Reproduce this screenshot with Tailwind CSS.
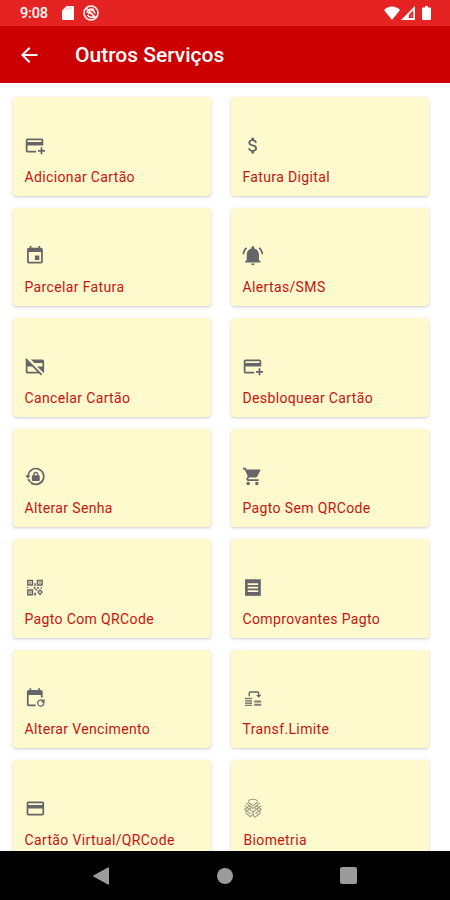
<!DOCTYPE html>
<html lang="pt-BR">
<head>
<meta charset="utf-8">
<title>Outros Serviços</title>
<script src="https://cdn.jsdelivr.net/npm/@tailwindcss/browser@4"></script>
</head>
<body class="bg-white">
<div class="flex h-[900px] w-[450px] flex-col overflow-hidden font-['Roboto',sans-serif]">
  <header class="shrink-0 text-white">
    <div class="flex h-[26px] items-center bg-[#e52322] pr-[19px] pl-5">
      <span class="w-[28px] pt-0.5 text-[14.500px] leading-none font-medium tracking-[-0.2px]">9:08</span>
      <svg class="ml-[14px] h-[14px] w-3" viewBox="0 0 12 14" fill="currentColor"><path d="M4.5 0H11a1 1 0 0 1 1 1v12a1 1 0 0 1-1 1H1a1 1 0 0 1-1-1V4.5z"/><path d="M4.7 1.6v2M6.9 1.6v2M9.1 1.6v2" stroke="#e52322" stroke-width=".7" opacity=".5"/></svg>
      <svg class="ml-[9px] size-[16px]" viewBox="0 0 16 16" fill="none" stroke="currentColor" stroke-width="1.6"><circle cx="8" cy="8" r="7"/><path d="M3.500 3.500 12.600 12.600M3.800 7.400C5 4 8.800 3.200 11 5.200M6 4.800c2.600-.600 5.400.800 6 3.600M4.500 10c1 2 4 3 6.500 1.800M5 8.500c1.500-1 3.500-.5 4.500 1"/></svg>
      <svg class="ml-auto h-[14px] w-4" viewBox="0 0 16 14" fill="currentColor"><path d="M8 14 0 4C4.400-.7 11.600-.7 16 4z"/></svg>
      <svg class="ml-px h-[14px] w-[14px]" viewBox="0 0 14 14"><path d="M14 0v14H0z" fill="currentColor"/><path d="M12.300 4.200V12H7.800V9z" fill="#e52322"/><path d="M11.200 8v3H9.600V9.600z" fill="currentColor" opacity=".35"/></svg>
      <svg class="ml-[7px] h-[14px] w-[9px]" viewBox="0 0 9 14" fill="currentColor"><path d="M3 0h3v1.500h2a1 1 0 0 1 1 1V13a1 1 0 0 1-1 1H1a1 1 0 0 1-1-1V2.500a1 1 0 0 1 1-1h2z"/></svg>
    </div>
    <div class="flex h-[57px] items-center bg-[#cc0000] pl-[17px]">
      <svg class="size-6" viewBox="0 0 24 24" fill="currentColor"><path d="M20.500 11H7.830l5.590-5.590L12 4l-8 8 8 8 1.410-1.410L7.830 13H20.500z"/></svg>
      <h1 class="ml-[34px] pt-0.5 text-[21px] leading-none font-medium">Outros Serviços</h1>
    </div>
  </header>

  <main class="grid min-h-0 flex-1 auto-rows-[98.500px] grid-cols-[198px_198px] content-start gap-x-5 gap-y-3 overflow-hidden pt-[14px] pl-[13px] text-[14px] leading-4 tracking-[0.36px] text-[#c61310] [&_section]:flex [&_section]:flex-col [&_section]:rounded-[4px] [&_section]:bg-[#fffacd] [&_section]:pt-[37.500px] [&_section]:pl-[11.500px] [&_section]:shadow-[0_1px_3px_rgba(70,70,100,0.28)] [&_svg]:mb-[13px] [&_svg]:-ml-[0.5px] [&_svg]:size-[21px] [&_svg]:fill-[#66666a]">
    <section>
      <svg viewBox="0 0 24 24"><path d="M20 4H4c-1.110 0-1.990.890-1.990 2L2 18c0 1.110.890 2 2 2h10v-2H4v-6h18V6c0-1.110-.890-2-2-2zm0 4H4V6h16v2zm4 9v2h-3v3h-2v-3h-3v-2h3v-3h2v3h3z"/></svg>
      <p>Adicionar Cartão</p>
    </section>
    <section>
      <svg viewBox="-.7 0 24 24"><path d="M11.800 10.900c-2.270-.590-3-1.200-3-2.150 0-1.090 1.010-1.850 2.700-1.850 1.780 0 2.440.850 2.500 2.100h2.210c-.070-1.720-1.120-3.300-3.210-3.810V3h-3v2.160c-1.940.420-3.500 1.680-3.500 3.610 0 2.310 1.910 3.460 4.700 4.130 2.500.600 3 1.480 3 2.410 0 .690-.490 1.790-2.700 1.790-2.060 0-2.870-.920-2.980-2.100h-2.200c.120 2.190 1.760 3.420 3.680 3.830V21h3v-2.150c1.950-.370 3.500-1.500 3.500-3.550 0-2.840-2.430-3.810-4.700-4.400z"/></svg>
      <p>Fatura Digital</p>
    </section>
    <section>
      <svg viewBox="-.5 0 24 24"><path d="M17 12h-5v5h5v-5zM16 1v2H8V1H6v2H5c-1.110 0-1.990.900-1.990 2L3 19c0 1.100.890 2 2 2h14c1.100 0 2-.900 2-2V5c0-1.100-.900-2-2-2h-1V1h-2zm3 18H5V8h14v11z"/></svg>
      <p>Parcelar Fatura</p>
    </section>
    <section>
      <svg viewBox="-.4 0 24 24"><path d="M5.600 4 4.200 2.600C1.900 4.400.300 7.300.200 10.500h2c.150-2.650 1.400-5 3.400-6.500zM21.800 10.500h2c-.150-3.200-1.730-6.100-4-7.900L18.400 4c2 1.500 3.300 3.850 3.400 6.500zM19 11c0-3.400-2-6-5.300-6.900V3.200C13.700 2.200 13 1.500 12 1.500s-1.700.700-1.700 1.700v.9C7 5 5 7.600 5 11v6l-2 2v1h18v-1l-2-2v-6zM12 23c1.100 0 2-.8 2-2h-4c0 1.200.9 2 2 2z"/></svg>
      <p>Alertas/SMS</p>
    </section>
    <section>
      <svg viewBox="0 0 24 24"><path d="M7.830 4H21c1.110 0 2 .890 2 2v12c0 .550-.220 1.050-.580 1.420L15 12h6V8h-9.170zM19.500 22.300 17.170 20H4c-1.110 0-2-.890-2-2V4.800L1.300 4.100 2.700 2.700 20.900 20.900zM4 12v6h11.170l-6-6z"/></svg>
      <p>Cancelar Cartão</p>
    </section>
    <section>
      <svg viewBox="0 0 24 24"><path d="M20 4H4c-1.110 0-1.990.890-1.990 2L2 18c0 1.110.890 2 2 2h10v-2H4v-6h18V6c0-1.110-.890-2-2-2zm0 4H4V6h16v2zm4 9v2h-3v3h-2v-3h-3v-2h3v-3h2v3h3z"/></svg>
      <p>Desbloquear Cartão</p>
    </section>
    <section>
      <svg viewBox="-.5 0 24 24"><path d="M13 2a10 10 0 0 0-9.900 8.800H.800L4 14.200l3.200-3.400H5.100A8 8 0 1 1 7.900 18l-1.300 1.600A10 10 0 1 0 13 2z"/><path d="M3.400 15.200c.6 1.600 1.500 3 2.800 4l1.300-1.500c-.9-.8-1.700-1.800-2.100-3z"/><path fill-rule="evenodd" d="M16.500 10.500h-.5V9.700a3 3 0 0 0-6 0v.8h-.5c-.6 0-1 .4-1 1V16c0 .6.400 1 1 1h7c.6 0 1-.4 1-1v-4.500c0-.6-.4-1-1-1zm-2 0h-3v-.8a1.500 1.500 0 0 1 3 0z"/></svg>
      <p>Alterar Senha</p>
    </section>
    <section>
      <svg viewBox="0 0 24 24"><path d="M7 18c-1.100 0-1.990.900-1.990 2S5.900 22 7 22s2-.900 2-2-.900-2-2-2zM1 2v2h2l3.600 7.590-1.350 2.450c-.160.280-.250.610-.250.960 0 1.100.900 2 2 2h12v-2H7.420c-.140 0-.250-.110-.250-.250l.030-.120.900-1.630h7.450c.750 0 1.410-.410 1.750-1.030l3.580-6.490A1 1 0 0 0 20 4H5.210l-.940-2H1zm16 16c-1.100 0-1.990.900-1.990 2s.890 2 1.990 2 2-.900 2-2-.900-2-2-2z"/></svg>
      <p>Pagto Sem QRCode</p>
    </section>
    <section>
      <svg viewBox="-.5 0 24 24"><path fill-rule="evenodd" d="M3 3h7v7H3zm1.700 1.700v3.600h3.600V4.700zM14 3h7v7h-7zm1.700 1.700v3.600h3.600V4.700zM3 14h7v7H3zm1.700 1.700v3.600h3.600v-3.600z"/><path d="M5.200 5.200h2.600v2.600H5.200zM16.200 5.200h2.600v2.600h-2.600zM5.200 16.200h2.600v2.600H5.200z" opacity=".6"/><path d="M11.200 7h1.600v3.500h-1.600zM3 11.500h1.500v1.200H3zM10.500 11.500h2v2h-2zM12.500 13.500h2v2h-2zM14.500 11.500h2v2h-2zM18.500 11.500H20v1.500h-1.500zM11.200 18h2v3h-2z"/><path d="M17.800 13.700 21.200 17l-3.400 4.200-3.400-4.200zm0 2.300-1.400 1.200 1.400 1.600 1.400-1.600z" fill-rule="evenodd"/></svg>
      <p>Pagto Com QRCode</p>
    </section>
    <section>
      <svg viewBox="-.5 0 24 24"><path fill-rule="evenodd" d="M3 2l1.500 1 1.500-1 1.500 1 1.500-1 1.500 1 1.500-1 1.500 1 1.500-1 1.500 1 1.500-1 1.500 1 1.500-1v20l-1.500-1-1.500 1-1.500-1-1.500 1-1.500-1-1.500 1-1.500-1-1.500 1-1.500-1-1.500 1-1.500-1-1.500 1zM6 7v2h12V7zm0 4v2h12v-2zm0 4v2h12v-2z"/></svg>
      <p>Comprovantes Pagto</p>
    </section>
    <section>
      <svg viewBox="-.3 0 24 24"><path d="M16 1.500v2H8v-2H6v2H5c-1.110 0-2 .9-2 2V20c0 1.100.890 2 2 2h8v-2H5V9h14v3h2V5.500c0-1.100-.9-2-2-2h-1v-2z"/><path d="M21.500 14.900A4.300 4.300 0 1 0 23.200 18h-1.600a2.800 2.800 0 1 1-1.200-1.900L18.800 17.700h4.500v-4.400z"/></svg>
      <p>Alterar Vencimento</p>
    </section>
    <section>
      <svg viewBox="-.5 0 24 24"><path d="M7 10.500V7c0-1.300.9-2.200 2.200-2.200h8c1.300 0 2.200.9 2.200 2.200v2h2.200l-3 3.200-3-3.200h2.200V6.500H8.600v4z"/><path d="M3 12.300h8v1.800H3zM3 15h8v1.800H3zM3 17.700h8v1.800H3zM3 20.300h8v1.500H3zM13.500 15.300h8v2.500h-8zM13.500 19h8v2.300h-8z" opacity=".85"/></svg>
      <p>Transf.Limite</p>
    </section>
    <section>
      <svg viewBox="0 0 24 24"><path d="M21 4H5c-1.110 0-1.990.890-1.990 2L3 18c0 1.110.890 2 2 2h16c1.110 0 2-.890 2-2V6c0-1.110-.890-2-2-2zm0 14H5v-6h16v6zm0-10H5V6h16v2z"/></svg>
      <p>Cartão Virtual/QRCode</p>
    </section>
    <section>
      <svg viewBox="-.5 0 24 24"><g fill="none" stroke="#a09e86" stroke-width="1.300" stroke-linecap="round"><path d="M7 2.800c3-1.600 7-1.600 10 0M4.500 6l7.500 6 7.500-6M7 4.800l5 4 5-4M2.800 9l9.200 7 9.200-7M2.500 13l6.500 5M21.500 13l-6 4.500M4 17.500l5 4M20 17.500l-5 4M9.500 11.500 3.500 16M14.500 11.500l6 4.500M8.500 8.500 3 12.500M15.500 8.500l5.500 4M12 17c.3 2 1 3.800 2 5M12 18.500l-2.500 2.500"/></g></svg>
      <p class="pl-px">Biometria</p>
    </section>
  </main>

  <nav class="flex h-[49px] shrink-0 items-center justify-between bg-black px-[93px]">
    <svg class="h-[18px] w-4 fill-[#9b9b9b]" viewBox="0 0 16 18"><path d="M15.300.2Q16 0 16 1v16q0 1-.7.800L.4 9.500q-.8-.5 0-1z"/></svg>
    <div class="size-4 rounded-full bg-[#9b9b9b]"></div>
    <div class="size-[17px] rounded-[2px] bg-[#9b9b9b]"></div>
  </nav>
</div>
</body>
</html>
